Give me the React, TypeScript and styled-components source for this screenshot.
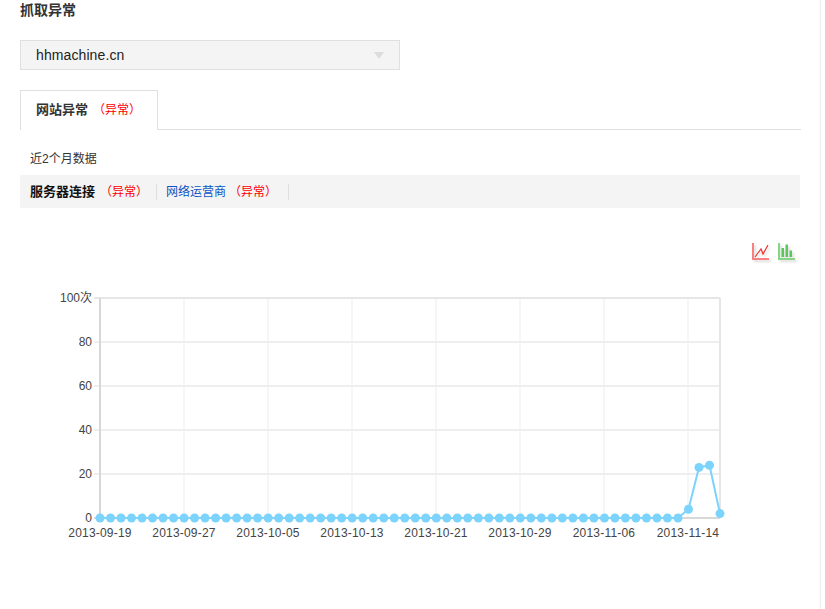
import React from "react";
import styled, { createGlobalStyle } from "styled-components";

const Global = createGlobalStyle`
  html, body { margin: 0; padding: 0; background: #fff; overflow: hidden; }
  body { font-family: "Liberation Sans", "Noto Sans CJK SC", sans-serif; font-size: 12px; color: #333; }
`;
const Page = styled.div`
  width: 821px; height: 609px; box-sizing: border-box;
  border-right: 1px solid #eee; padding: 0 20px;
`;
const Title = styled.h2`
  margin: 0; height: 40px; font-size: 14px; line-height: 20px; font-weight: bold; color: #333;
`;
const Select = styled.div`
  width: 380px; height: 30px; box-sizing: border-box; background: #f4f4f4; border: 1px solid #e0e0e0;
  display: flex; align-items: center; justify-content: space-between; padding: 0 15px;
  font-size: 14px; letter-spacing: 0.1px; color: #222;
`;
const Caret = styled.span`
  width: 0; height: 0; border-left: 5px solid transparent; border-right: 5px solid transparent;
  border-top: 7px solid #ddd;
`;
const Tabs = styled.div`
  margin-top: 20px; width: 781px; height: 39px; border-bottom: 1px solid #e0e0e0; display: flex;
`;
const Tab = styled.div`
  width: 138px; height: 40px; box-sizing: border-box; background: #fff;
  border: 1px solid #e0e0e0; border-bottom: none; padding-left: 15px;
  line-height: 38px; font-weight: bold; font-size: 13px; color: #333;
`;
const Flag = styled.span<{ $gap: number }>`
  margin-left: ${p => p.$gap}px; color: #f00; font-weight: normal; font-size: 12px;
`;
const Note = styled.div`
  padding: 20px 0 0 10px; line-height: 18px; height: 25px; font-size: 12px; color: #333;
`;
const SubBar = styled.div`
  width: 780px; height: 33px; background: #f4f4f4; display: flex; align-items: center; padding-left: 10px; box-sizing: border-box;
`;
const SubItem = styled.div<{ $active?: boolean; $pad: number }>`
  height: 16px; line-height: 16px; padding-right: ${p => p.$pad}px; margin-right: 9px; border-right: 1px solid #e0e0e0;
  font-size: ${p => (p.$active ? "13px" : "12px")}; font-weight: ${p => (p.$active ? "bold" : "normal")}; color: ${p => (p.$active ? "#111" : "#0b55c4")};
`;
const Icons = styled.div`
  margin-top: 35px; width: 776px; height: 20px; display: flex; justify-content: flex-end; gap: 8px;
`;
const IconSvg = styled.svg`
  display: block; overflow: visible; filter: drop-shadow(2px 2px 1px rgba(0, 0, 0, 0.14));
`;
const Chart = styled.svg`
  display: block; margin: 0 0 0 -20px;
`;

const pts = Array.from({ length: 60 }, (_, i) => {
  const v = i === 56 ? 4 : i === 57 ? 23 : i === 58 ? 24 : i === 59 ? 2 : 0;
  return [100 + (i * 620) / 59, 518 - v * 2.2];
});
const offY = 263;
const LineIcon = () => (
  <IconSvg width="18" height="18" viewBox="0 0 18 18">
    <path d="M1 0V16H17" fill="none" stroke="#f98080" strokeWidth="2" />
    <path d="M3 14L9 6L11 11L16 2" fill="none" stroke="#ee3030" strokeWidth="1.2" />
  </IconSvg>
);
const BarIcon = () => (
  <IconSvg width="18" height="18" viewBox="0 0 18 18">
    <path d="M1 0V16H17" fill="none" stroke="#85d685" strokeWidth="2" />
    <path d="M3.5 5h2.5v9H3.5zM7.5 1.5h2.5V14H7.5zM11.5 7.5h2.5V14h-2.5z" fill="#58c858" />
  </IconSvg>
);

export default function App() {
  const dates = ["2013-09-19","2013-09-27","2013-10-05","2013-10-13","2013-10-21","2013-10-29","2013-11-06","2013-11-14"];
  const ys = [["100次",298],["80",342],["60",386],["40",430],["20",474],["0",518]] as const;
  return (
    <Page>
      <Global />
      <Title>抓取异常</Title>
      <Select>hhmachine.cn<Caret /></Select>
      <Tabs><Tab>网站异常<Flag $gap={5}>（异常）</Flag></Tab></Tabs>
      <Note>近2个月数据</Note>
      <SubBar>
        <SubItem $active $pad={8}>服务器连接<Flag $gap={5}>（异常）</Flag></SubItem>
        <SubItem $pad={11}>网络运营商<Flag $gap={3}>（异常）</Flag></SubItem>
      </SubBar>
      <Icons><LineIcon /><BarIcon /></Icons>
      <Chart width="821" height="346" viewBox={`0 ${offY} 821 346`}>
        {dates.map((d, i) => {
          const x = 100 + i * 84;
          return i === 0 ? null : <line key={d} x1={x} x2={x} y1="298" y2="518" stroke="#f6f6f6" strokeWidth="2" />;
        })}
        {ys.slice(1, 5).map(([l, y]) => <line key={l} x1="94" x2="720" y1={y} y2={y} stroke="#eee" strokeWidth="2" />)}
        <line x1="94" x2="720" y1="298" y2="298" stroke="#e6e6e6" strokeWidth="2" />
        <line x1="720" x2="720" y1="298" y2="518" stroke="#e6e6e6" strokeWidth="2" />
        <line x1="100" x2="100" y1="298" y2="518" stroke="#d8d8d8" strokeWidth="2" />
        <line x1="94" x2="720" y1="518" y2="518" stroke="#d8d8d8" strokeWidth="2" />
        {ys.map(([l, y]) => (
          <text key={l} x="92" y={y + 4} textAnchor="end" fontSize="12" fill="#444">{l}</text>
        ))}
        {dates.map((d, i) => (
          <text key={d} x={100 + i * 84} y="537" textAnchor="middle" fontSize="12" letterSpacing="0.2" fill="#444">{d}</text>
        ))}
        <polyline points={pts.map(p => p.join(",")).join(" ")} fill="none" stroke="#7cd3fc" strokeWidth="2" />
        {pts.map(([x, y]) => <circle key={x} cx={x} cy={y} r="4.5" fill="#7cd3fc" />)}
      </Chart>
    </Page>
  );
}
